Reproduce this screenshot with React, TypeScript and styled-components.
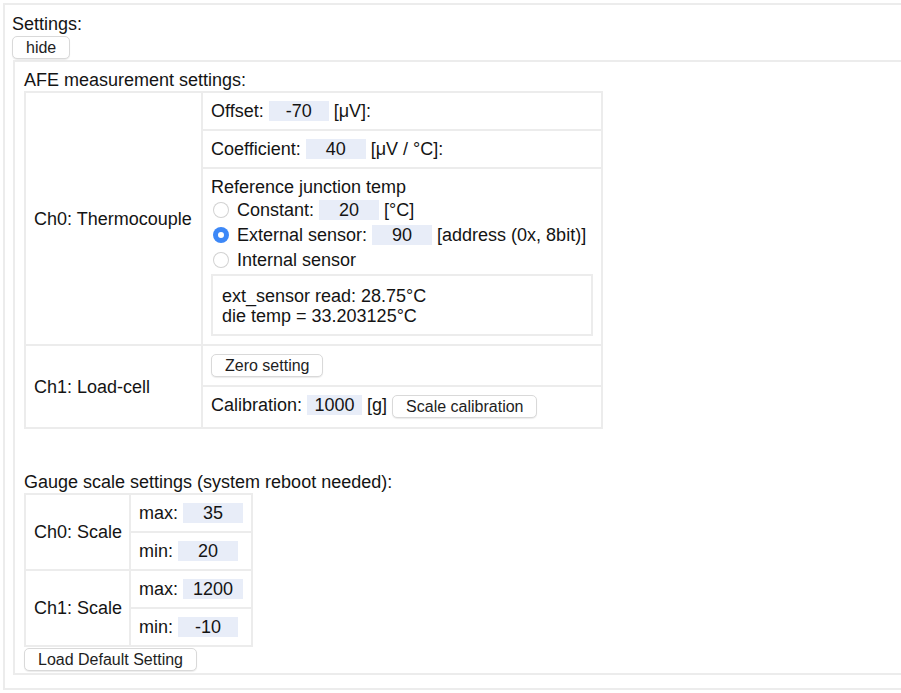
import React from "react";
import styled, { createGlobalStyle } from "styled-components";

const GlobalStyle = createGlobalStyle`
  html, body {
    margin: 0;
    padding: 0;
    overflow: hidden;
    background: #ffffff;
  }
  body {
    font-family: "Liberation Sans", Arial, Helvetica, sans-serif;
    font-size: 18px;
    color: #141414;
  }
`;

const Panel = styled.section`
  box-sizing: border-box;
  width: 930px;
  margin: 3px 0 0 3px;
  border: 2px solid #ececec;
  padding: 9px 8px 13px 7px;
`;

const Title = styled.div`
  line-height: 21px;
`;

const Button = styled.button<{ $mt?: number }>`
  box-sizing: border-box;
  height: 23px;
  padding: 0 13px;
  margin: ${(p) => p.$mt ?? 0}px 0 0 0;
  font-family: "Liberation Sans", Arial, Helvetica, sans-serif;
  font-size: 16px;
  line-height: 21px;
  color: #1e1e1e;
  background: #ffffff;
  border: 1px solid #d9d9d9;
  border-radius: 5px;
  box-shadow: 0 1px 1px rgba(0, 0, 0, 0.08);
  vertical-align: top;
`;

const Group = styled.div`
  margin: 1px 0 0 1px;
  border: 2px solid #ececec;
  padding: 8px 10px 2px 9px;
`;

const Heading = styled.div<{ $mt?: number }>`
  line-height: 20px;
  margin-top: ${(p) => p.$mt ?? 0}px;
`;

const Table = styled.table<{ $w: number }>`
  border-collapse: collapse;
  table-layout: fixed;
  width: ${(p) => p.$w}px;
  margin-top: 1px;
`;

const Cell = styled.td`
  border: 2px solid #ececec;
  padding: 8px;
  line-height: 20px;
  vertical-align: middle;
  white-space: nowrap;
`;

const Field = styled.input<{ $w?: number }>`
  box-sizing: border-box;
  width: ${(p) => p.$w ?? 60}px;
  height: 20px;
  padding: 0;
  margin: 0;
  border: none;
  outline: none;
  background: #e8edf8;
  font-family: "Liberation Sans", Arial, Helvetica, sans-serif;
  font-size: 18px;
  line-height: 20px;
  color: #141414;
  text-align: center;
  vertical-align: top;
`;

const RadioLine = styled.label`
  display: flex;
  align-items: center;
  height: 25px;
  white-space: pre;
`;

const Radio = styled.input.attrs({ type: "radio" })`
  appearance: none;
  -webkit-appearance: none;
  width: 16px;
  height: 16px;
  margin: 0 8px 0 2px;
  border-radius: 50%;
  background: #ffffff;
  box-shadow: inset 0 0 0 1px #d2d2d2;
  &:checked {
    box-shadow: inset 0 0 0 5px #3d88f7;
  }
`;

const InfoBox = styled.div`
  margin-top: 2px;
  border: 2px solid #ececec;
  padding: 10px 9px 8px 9px;
  line-height: 20px;
`;

const ButtonCell = styled(Cell)<{ $pb?: number }>`
  padding-top: 8px;
  padding-bottom: ${(p) => p.$pb ?? 8}px;
`;

export default function App() {
  return (
    <>
      <GlobalStyle />
      <Panel>
        <Title>Settings:</Title>
        <Button $mt={1}>hide</Button>
        <Group>
          <Heading>AFE measurement settings:</Heading>
          <Table $w={577}>
            <colgroup>
              <col style={{ width: 177 }} />
              <col style={{ width: 400 }} />
            </colgroup>
            <tbody>
              <tr>
                <Cell rowSpan={3}>Ch0: Thermocouple</Cell>
                <Cell>
                  Offset: <Field readOnly defaultValue="-70" /> [μV]:
                </Cell>
              </tr>
              <tr>
                <Cell>
                  Coefficient: <Field readOnly defaultValue="40" /> [μV / °C]:
                </Cell>
              </tr>
              <tr>
                <Cell>
                  <div>Reference junction temp</div>
                  <RadioLine>
                    <Radio name="rj" />
                    Constant: <Field readOnly defaultValue="20" /> [°C]
                  </RadioLine>
                  <RadioLine>
                    <Radio name="rj" defaultChecked />
                    External sensor: <Field readOnly defaultValue="90" /> [address (0x, 8bit)]
                  </RadioLine>
                  <RadioLine>
                    <Radio name="rj" />
                    Internal sensor
                  </RadioLine>
                  <InfoBox>
                    ext_sensor read: 28.75°C
                    <br />
                    die temp = 33.203125°C
                  </InfoBox>
                </Cell>
              </tr>
              <tr>
                <Cell rowSpan={2}>Ch1: Load-cell</Cell>
                <ButtonCell>
                  <Button>Zero setting</Button>
                </ButtonCell>
              </tr>
              <tr>
                <ButtonCell $pb={9}>
                  Calibration: <Field $w={55} readOnly defaultValue="1000" /> [g]{" "}
                  <Button>Scale calibration</Button>
                </ButtonCell>
              </tr>
            </tbody>
          </Table>

          <Heading $mt={43}>Gauge scale settings (system reboot needed):</Heading>
          <Table $w={227}>
            <colgroup>
              <col style={{ width: 105 }} />
              <col style={{ width: 122 }} />
            </colgroup>
            <tbody>
              <tr>
                <Cell rowSpan={2}>Ch0: Scale</Cell>
                <Cell>
                  max: <Field readOnly defaultValue="35" />
                </Cell>
              </tr>
              <tr>
                <Cell>
                  min: <Field readOnly defaultValue="20" />
                </Cell>
              </tr>
              <tr>
                <Cell rowSpan={2}>Ch1: Scale</Cell>
                <Cell>
                  max: <Field readOnly defaultValue="1200" />
                </Cell>
              </tr>
              <tr>
                <Cell>
                  min: <Field readOnly defaultValue="-10" />
                </Cell>
              </tr>
            </tbody>
          </Table>
          <Button $mt={1}>Load Default Setting</Button>
        </Group>
      </Panel>
    </>
  );
}
